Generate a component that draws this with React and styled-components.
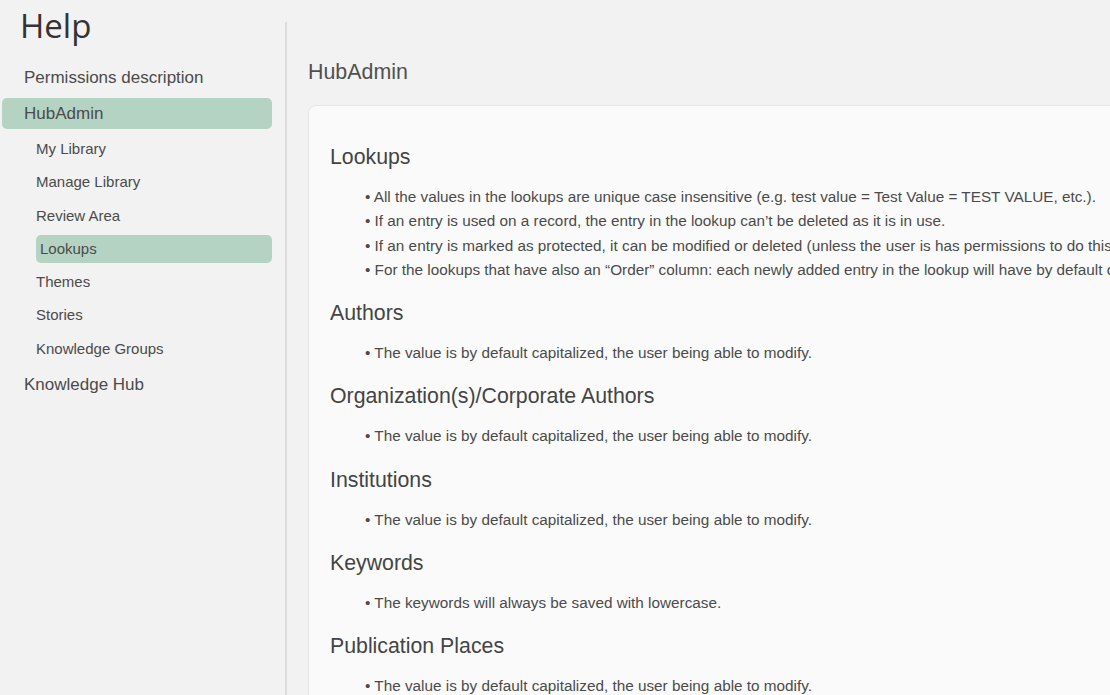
import React from 'react'
import styled, { createGlobalStyle } from 'styled-components'

const GlobalStyle = createGlobalStyle`
  html, body {
    margin: 0;
    padding: 0;
    background: #f2f2f2;
    overflow: hidden;
  }
  body {
    font-family: 'Liberation Sans', Arial, sans-serif;
    color: #4b4b4b;
  }
`

const Page = styled.div`
  display: flex;
  height: 100vh;
  overflow: hidden;
`
const Sidebar = styled.nav`
  flex: 0 0 285px;
  box-sizing: border-box;
  padding: 6px 13px 0 2px;
`
const Title = styled.h1`
  margin: 0 0 16px 18px;
  font-family: 'Open Sans', sans-serif;
  font-weight: 400;
  font-size: 33px;
  line-height: 40px;
  color: #333;
`
const NavItem = styled.div`
  height: 31px;
  line-height: 31px;
  padding-left: 22px;
  margin-bottom: ${p => (p.$last ? 0 : '5px')};
  font-size: 17px;
  color: #4b4b4b;
  border-radius: 5px;
  background: ${p => (p.$active ? '#b5d3c3' : 'transparent')};
`
const SubList = styled.div`
  display: flex;
  flex-direction: column;
  gap: 5.3px;
  margin: 6px 0 6.5px 34px;
`
const SubItem = styled.div`
  height: 28px;
  line-height: 28px;
  padding-left: ${p => (p.$active ? '4px' : '0')};
  font-size: 15px;
  color: #4b4b4b;
  border-radius: 5px;
  background: ${p => (p.$active ? '#b5d3c3' : 'transparent')};
`
const Main = styled.main`
  flex: 1;
  min-width: 0;
  margin-top: 22px;
  border-left: 2px solid #dcdcdc;
  padding: 38px 0 0 21px;
  overflow: hidden;
`
const PageHeading = styled.h2`
  margin: 0 0 21px;
  font-size: 21.4px;
  font-weight: 400;
  line-height: 24px;
  color: #505050;
`
const Card = styled.section`
  width: 1100px;
  box-sizing: border-box;
  background: #fafafa;
  border: 1px solid #e6e6e6;
  border-radius: 8px;
  padding: 39px 0 0 21px;
  min-height: 700px;
`
const SectionTitle = styled.h3`
  margin: 0;
  font-size: 21.3px;
  font-weight: 400;
  line-height: 24px;
  color: #444;
`
const Bullets = styled.ul`
  list-style: none;
  margin: 16px 0 19px;
  padding: 0 0 0 35px;
`
const Bullet = styled.li`
  font-size: 15.3px;
  line-height: 24.3px;
  white-space: nowrap;
  color: #4b4b4b;
  &::before {
    content: '• ';
  }
`

const subItems = [
  'My Library',
  'Manage Library',
  'Review Area',
  'Lookups',
  'Themes',
  'Stories',
  'Knowledge Groups',
]

const capitalized = 'The value is by default capitalized, the user being able to modify.'

const sections = [
  {
    title: 'Lookups',
    items: [
      'All the values in the lookups are unique case insensitive (e.g. test value = Test Value = TEST VALUE, etc.).',
      'If an entry is used on a record, the entry in the lookup can\u2019t be deleted as it is in use.',
      'If an entry is marked as protected, it can be modified or deleted (unless the user is has permissions to do this).',
      'For the lookups that have also an \u201cOrder\u201d column: each newly added entry in the lookup will have by default order 0.',
    ],
  },
  { title: 'Authors', items: [capitalized] },
  { title: 'Organization(s)/Corporate Authors', items: [capitalized] },
  { title: 'Institutions', items: [capitalized] },
  { title: 'Keywords', items: ['The keywords will always be saved with lowercase.'] },
  { title: 'Publication Places', items: [capitalized] },
]

const App = () => {
  return (
    <>
      <GlobalStyle />
      <Page>
        <Sidebar>
          <Title>Help</Title>
          <NavItem>Permissions description</NavItem>
          <NavItem $active $last>HubAdmin</NavItem>
          <SubList>
            {subItems.map(s => (
              <SubItem key={s} $active={s === 'Lookups'}>{s}</SubItem>
            ))}
          </SubList>
          <NavItem>Knowledge Hub</NavItem>
        </Sidebar>
        <Main>
          <PageHeading>HubAdmin</PageHeading>
          <Card>
            {sections.map(sec => (
              <div key={sec.title}>
                <SectionTitle>{sec.title}</SectionTitle>
                <Bullets>
                  {sec.items.map(it => (
                    <Bullet key={it}>{it}</Bullet>
                  ))}
                </Bullets>
              </div>
            ))}
          </Card>
        </Main>
      </Page>
    </>
  )
}

export default App
